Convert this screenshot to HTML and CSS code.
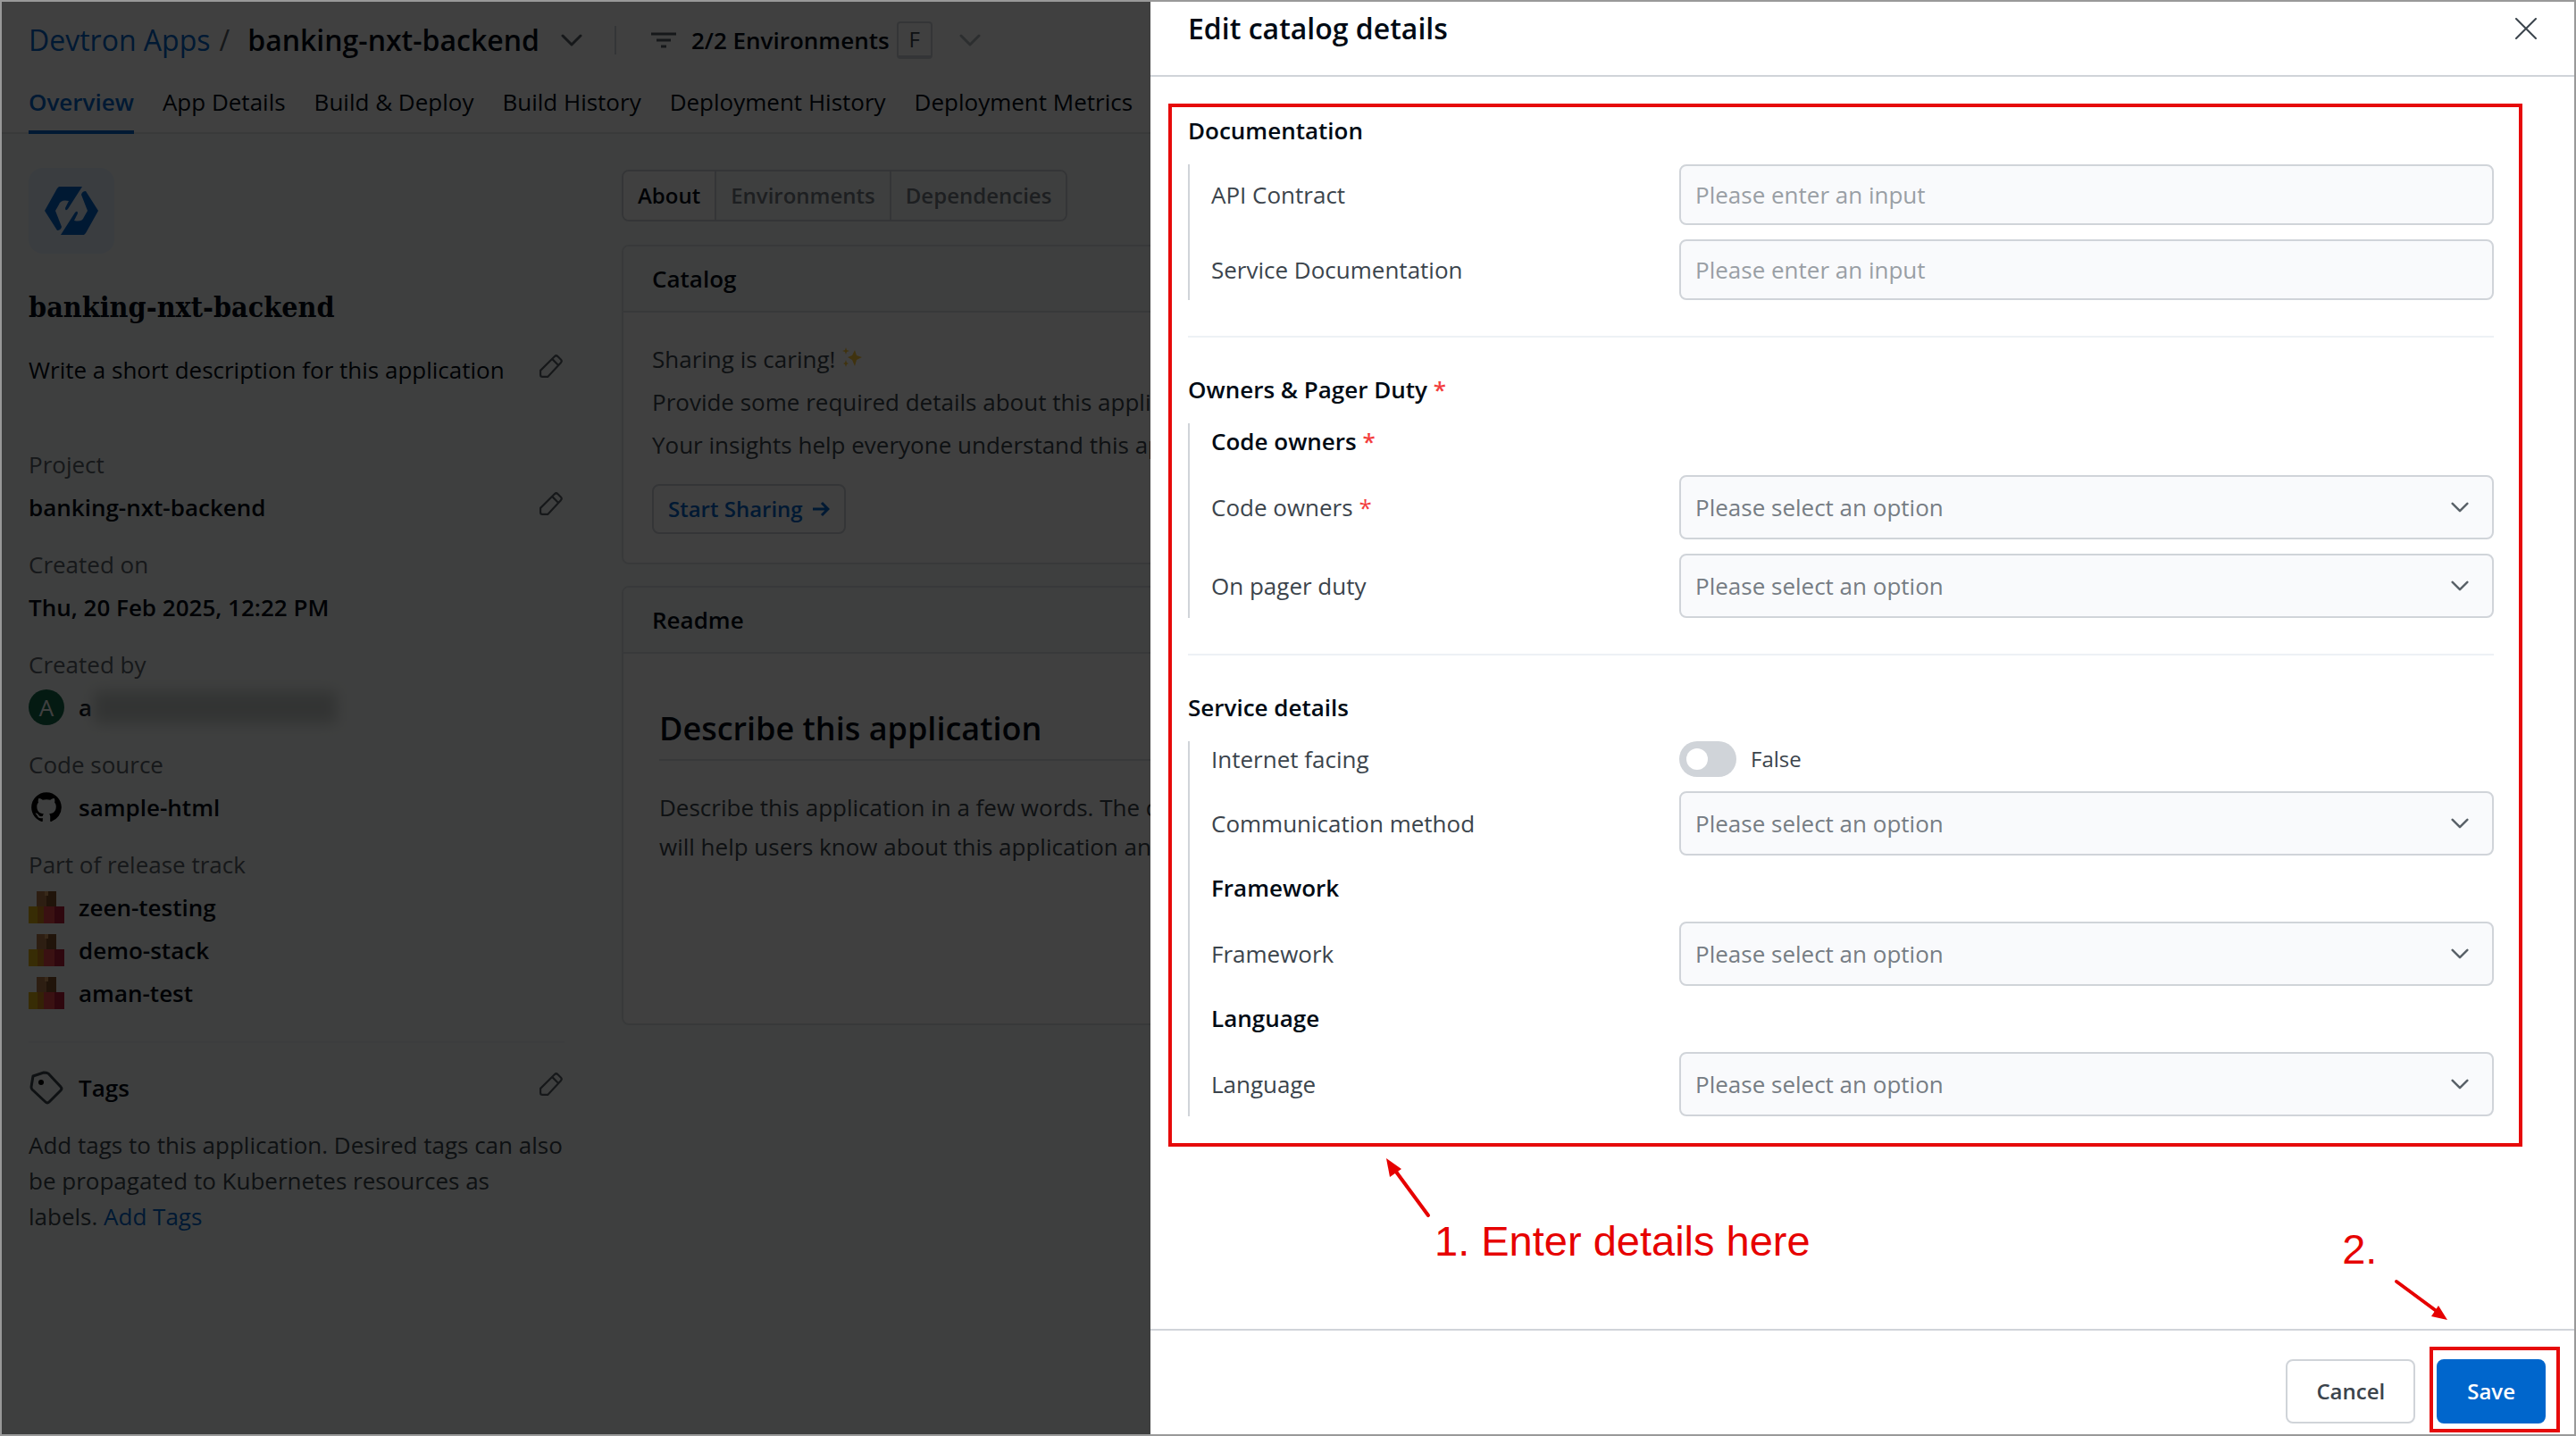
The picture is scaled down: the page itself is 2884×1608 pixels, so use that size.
FILE: index.html
```html
<!DOCTYPE html>
<html lang="en">
<head>
<meta charset="utf-8">
<meta name="viewport" content="width=device-width, initial-scale=1">
<title>banking-nxt-backend - Edit catalog details</title>
<link rel="stylesheet" href="styles.css">
</head>
<body>
<svg class="sprite" aria-hidden="true">
  <symbol id="chevron" viewBox="0 0 24 24"><path d="M2 7l10 10L22 7" fill="none" stroke="currentColor" stroke-width="3" stroke-linecap="round" stroke-linejoin="round"/></symbol>
  <symbol id="pencil" viewBox="2 2 24 24"><path d="M3 18.5 17.500 4a2.500 2.500 0 0 1 3.500 0l3 3a2.500 2.500 0 0 1 0 3.500L10.500 25H5a2 2 0 0 1-2-2zM15 6.500l6.500 6.500" fill="none" stroke="currentColor" stroke-width="2" stroke-linejoin="round"/></symbol>
  <symbol id="boxes" viewBox="0 0 40 36"><path fill="#b5794a" d="M9 0h11v18H9z"/><path fill="#80502b" d="M20 0h11v18H20z"/><path fill="#dcae14" d="M0 17h10v19H0z"/><path fill="#d08218" d="M10 17h10v19H10z"/><path fill="#e8434a" d="M17 17h12v19H17z"/><path fill="#b61f38" d="M29 17h11v19H29z"/><path fill="#d9a066" d="M18 0h4v5h-4z"/></symbol>
  <symbol id="logo-half" viewBox="0 0 60 54"><path d="M16 0h26L26 25q-3 3-3-1l4-8q-9-2-11 4l-4 7 7 18q-1 4-5 4L0 27 14 2z"/></symbol>
</svg>
<div class="frame">
  <div class="app">
    <header class="app-header">
      <div class="crumbs">
        <a class="link" href="#">Devtron Apps</a><span class="slash">/</span>
        <strong class="app-name">banking-nxt-backend</strong>
        <svg class="chev"><use href="#chevron"/></svg>
        <span class="rule"></span>
        <svg class="filter" viewBox="0 0 30 18"><path d="M1 2h28M7 9h16M12 16h6" fill="none" stroke="currentColor" stroke-width="3"/></svg>
        <span class="env-count">2/2 Environments</span><kbd class="key">F</kbd>
        <svg class="chev chev-dim"><use href="#chevron"/></svg>
      </div>
      <nav class="tabs">
        <a class="tab tab-active" href="#">Overview</a>
        <a class="tab" href="#">App Details</a>
        <a class="tab" href="#">Build &amp; Deploy</a>
        <a class="tab" href="#">Build History</a>
        <a class="tab" href="#">Deployment History</a>
        <a class="tab" href="#">Deployment Metrics</a>
      </nav>
    </header>
    <div class="columns">
      <section class="sidebar">
        <div class="tile"><svg class="logo" viewBox="0 0 60 54"><use href="#logo-half" width="60" height="54"/><use href="#logo-half" width="60" height="54" transform="rotate(180 30 27)"/></svg></div>
        <h1 class="side-title">banking-nxt-backend</h1>
        <div class="row desc"><span>Write a short description for this application</span><svg class="pencil"><use href="#pencil"/></svg></div>
        <dl class="facts">
          <div class="fact"><dt>Project</dt><dd class="row"><span>banking-nxt-backend</span><svg class="pencil"><use href="#pencil"/></svg></dd></div>
          <div class="fact"><dt>Created on</dt><dd>Thu, 20 Feb 2025, 12:22 PM</dd></div>
          <div class="fact"><dt>Created by</dt><dd class="item"><span class="avatar">A</span><span>a</span><span class="redacted"></span></dd></div>
          <div class="fact"><dt>Code source</dt><dd class="item"><svg class="icon" viewBox="-1.500 -1.500 19 19"><path d="M8 0C3.580 0 0 3.580 0 8c0 3.540 2.290 6.530 5.470 7.590.4.070.55-.17.55-.38 0-.19-.01-.82-.01-1.490-2.010.37-2.530-.49-2.690-.94-.09-.23-.48-.94-.82-1.130-.28-.15-.68-.52-.01-.53.63-.01 1.080.58 1.230.82.720 1.210 1.870.870 2.330.660.070-.52.280-.87.510-1.070-1.780-.2-3.640-.89-3.640-3.950 0-.87.310-1.590.820-2.150-.08-.2-.36-1.020.08-2.120 0 0 .67-.21 2.200.82.640-.18 1.320-.27 2-.27s1.360.09 2 .27c1.530-1.040 2.200-.82 2.200-.82.440 1.100.160 1.920.080 2.120.510.560.820 1.270.820 2.150 0 3.070-1.870 3.750-3.650 3.950.290.250.540.730.540 1.480 0 1.070-.01 1.930-.01 2.200 0 .210.150.460.550.380A8 8 0 0 0 16 8c0-4.420-3.580-8-8-8z"/></svg><span>sample-html</span></dd></div>
          <div class="fact"><dt>Part of release track</dt>
            <dd class="item"><svg class="icon"><use href="#boxes"/></svg><span>zeen-testing</span></dd>
            <dd class="item"><svg class="icon"><use href="#boxes"/></svg><span>demo-stack</span></dd>
            <dd class="item"><svg class="icon"><use href="#boxes"/></svg><span>aman-test</span></dd></div>
        </dl>
        <div class="tags">
          <div class="row tags-head"><h2 class="item tags-title"><svg class="icon" viewBox="0 0 40 40"><path d="M5 7 17 3q3 0 5 1l14 15q2 2 0 4L23 36q-2 2-4 0L4 22q-1-1-1-3z" fill="none" stroke="#3b444c" stroke-width="3" stroke-linejoin="round"/><circle cx="14" cy="14" r="3"/></svg><span>Tags</span></h2><svg class="pencil"><use href="#pencil"/></svg></div>
          <p class="tags-text">Add tags to this application. Desired tags can also be propagated to Kubernetes resources as labels. <a class="link" href="#">Add Tags</a></p>
        </div>
      </section>
      <main class="main">
        <div class="segments">
          <button class="segment segment-active" type="button">About</button><button class="segment" type="button">Environments</button><button class="segment" type="button">Dependencies</button>
        </div>
        <section class="card">
          <h2 class="card-head">Catalog</h2>
          <div class="card-body">
            <p>Sharing is caring! <svg class="sparkle" viewBox="0 0 24 24"><path fill="#ffc93c" d="M15 4l2 6 6 2-6 3-2 7-3-7-5-3 5-2zM5 1l1 3 3 1-3 1-1 3-1-3-3-1 3-1zM5 15l1 3 2 1-2 1-1 3-1-3-2-1 2-1z"/></svg></p>
            <p>Provide some required details about this application.</p>
            <p>Your insights help everyone understand this application better.</p>
            <button class="share" type="button">Start Sharing <svg class="arrow" viewBox="0 0 20 20"><path d="M1 10h17M11 3l7 7-7 7" fill="none" stroke="currentColor" stroke-width="3"/></svg></button>
          </div>
        </section>
        <section class="card">
          <h2 class="card-head">Readme</h2>
          <div class="readme">
            <h3>Describe this application</h3>
            <p>Describe this application in a few words. The description<br>will help users know about this application and its use.</p>
          </div>
        </section>
      </main>
    </div>
  </div>
  <div class="backdrop"></div>
  <aside class="drawer">
    <header class="drawer-head">
      <h2>Edit catalog details</h2>
      <button class="close" type="button" aria-label="Close"><svg viewBox="0 0 24 24"><path d="M1 1l22 22M23 1 1 23" fill="none" stroke="currentColor" stroke-width="2" stroke-linecap="round"/></svg></button>
    </header>
    <form class="drawer-body" id="catalog">
      <section class="section">
        <h3>Documentation</h3>
        <div class="group">
          <div class="field"><label for="api">API Contract</label><input class="control text" id="api" type="text" placeholder="Please enter an input"></div>
          <div class="field"><label for="doc">Service Documentation</label><input class="control text" id="doc" type="text" placeholder="Please enter an input"></div>
        </div>
      </section>
      <section class="section">
        <h3>Owners &amp; Pager Duty <span class="req">*</span></h3>
        <div class="group">
          <h4>Code owners <span class="req">*</span></h4>
          <div class="field"><label for="owners">Code owners <span class="req">*</span></label><div class="picker"><select class="control" id="owners"><option>Please select an option</option></select><svg class="chev"><use href="#chevron"/></svg></div></div>
          <div class="field"><label for="pager">On pager duty</label><div class="picker"><select class="control" id="pager"><option>Please select an option</option></select><svg class="chev"><use href="#chevron"/></svg></div></div>
        </div>
      </section>
      <section class="section">
        <h3>Service details</h3>
        <div class="group">
          <div class="field"><label for="facing">Internet facing</label><div class="switch"><input class="toggle" id="facing" type="checkbox" role="switch"><span>False</span></div></div>
          <div class="field"><label for="comm">Communication method</label><div class="picker"><select class="control" id="comm"><option>Please select an option</option></select><svg class="chev"><use href="#chevron"/></svg></div></div>
          <h4>Framework</h4>
          <div class="field"><label for="framework">Framework</label><div class="picker"><select class="control" id="framework"><option>Please select an option</option></select><svg class="chev"><use href="#chevron"/></svg></div></div>
          <h4>Language</h4>
          <div class="field"><label for="language">Language</label><div class="picker"><select class="control" id="language"><option>Please select an option</option></select><svg class="chev"><use href="#chevron"/></svg></div></div>
        </div>
      </section>
      <div class="mark mark-form"></div>
      <div class="note note-form"><svg class="note-arrow-form" viewBox="0 0 56 72"><path d="M51 67 12 14" fill="none" stroke="currentColor" stroke-width="4" stroke-linecap="round"/><path fill="currentColor" d="M4 3l17 12-13 9z"/></svg><span>1. Enter details here</span></div>
    </form>
    <footer class="drawer-foot">
      <button class="btn" type="button">Cancel</button>
      <div class="save-wrap"><button class="btn btn-primary" type="submit" form="catalog">Save</button><div class="mark mark-save"></div>
      <div class="note note-save"><span>2.</span><svg class="note-arrow-save" viewBox="0 0 64 52"><path d="M4 4l46 34" fill="none" stroke="currentColor" stroke-width="4" stroke-linecap="round"/><path fill="currentColor" d="M61 47 43 43l8-12z"/></svg></div></div>
    </footer>
  </aside>
</div>
</body>
</html>
```
FILE: styles.css
```css
* { box-sizing: border-box; }
body, h1, h2, h3, h4, p, dl, dd { margin: 0; }
body {
  font: 400 26px/40px "Open Sans", sans-serif;
  color: #000a14;
  background: #fff;
}
button, input, select { font: inherit; color: inherit; margin: 0; }
button { font-size: 24px; font-weight: 600; }
a { color: inherit; text-decoration: none; }
svg { display: block; flex: none; }
.sprite { position: absolute; width: 0; height: 0; }
.link { color: #0066cc; }

.frame { position: relative; min-height: 100vh; border: 2px solid #999; overflow: hidden; display: grid; }

/* Application page */
.app { display: flex; flex-direction: column; background: #f8fcfa; }
.app-header { background: #fff; border-bottom: 2px solid #e2e8e6; padding: 18px 30px 0; white-space: nowrap; }
.crumbs { display: flex; align-items: center; height: 50px; font-size: 32px; }
.slash { margin: 0 20px 0 10px; color: #596168; }
.app-name { font-weight: 600; }
.chev { width: 24px; height: 24px; color: #596168; }
.crumbs .chev { margin-left: 24px; }
.crumbs .chev-dim { margin-left: 30px; color: #b0b7bc; }
.rule { width: 2px; height: 32px; margin: 0 38px 0 36px; background: #d0d4d9; }
.filter { width: 30px; height: 18px; margin-right: 16px; color: #596168; }
.env-count { font-size: 26px; font-weight: 600; }
.key { width: 40px; height: 42px; margin-left: 8px; border: 2px solid #d0d4d9; border-bottom-width: 4px; border-radius: 4px; font: 24px/36px "Open Sans", sans-serif; text-align: center; color: #3b444c; }
.tabs { display: flex; gap: 32px; margin-top: 24px; }
.tab { padding-bottom: 12px; border-bottom: 4px solid transparent; margin-bottom: -2px; }
.tab-active { color: #0066cc; border-color: #0066cc; font-weight: 600; }

.columns { display: flex; flex: 1; padding: 38px 30px 24px; gap: 64px; }
.sidebar { flex: none; width: 600px; }
.tile { display: grid; place-items: center; width: 96px; height: 96px; border-radius: 16px; background: #e5f2ff; }
.logo { width: 60px; height: 54px; fill: #0066cc; }
.side-title { margin: 38px 0 28px; font: 700 32px/44px "DejaVu Serif Condensed", "DejaVu Serif", serif; }
.row { display: flex; align-items: center; justify-content: space-between; }
.pencil { width: 26px; height: 26px; margin: 0 2px 8px 0; color: #596168; }
.facts { margin-top: 66px; }
.fact { margin-bottom: 24px; }
.fact dt { color: #596168; }
.fact dd { margin-top: 8px; font-weight: 600; }
.item { display: flex; align-items: center; gap: 16px; }
.icon { width: 40px; height: 40px; }
.avatar { width: 40px; height: 40px; border-radius: 50%; background: #12684a; color: #fff; text-align: center; font-weight: 400; }
.redacted { width: 272px; height: 36px; margin-left: -14px; background: #c8cdcb; filter: blur(8px); }
.tags { margin-top: 34px; border-top: 2px solid #edf1f5; padding-top: 30px; }
.tags-title { font-size: 26px; font-weight: 600; line-height: 40px; }
.tags-text { margin-top: 24px; color: #3b444c; }

.main { flex: 1; min-width: 0; color: #3b444c; white-space: nowrap; }
.segments { display: flex; width: max-content; margin: 2px 0 26px; border: 2px solid #d0d4d9; border-radius: 8px; overflow: hidden; }
.segment { height: 54px; padding: 0 16px; border: 0; border-right: 2px solid #d0d4d9; background: #f8fcfa; color: #767d84; }
.segment:last-child { border-right: 0; }
.segment-active { background: #fff; color: #000a14; }
.card { border: 2px solid #dde3e6; border-radius: 8px; background: #fff; margin-bottom: 24px; overflow: hidden; }
.card-head { padding: 16px 32px; background: #f8fcfa; border-bottom: 2px solid #dde3e6; color: #000a14; font-size: 26px; font-weight: 600; line-height: 40px; }
.card-body { padding: 28px 32px 32px; line-height: 48px; }
.sparkle { display: inline-block; width: 24px; height: 24px; }
.share { display: flex; align-items: center; gap: 10px; height: 56px; margin-top: 20px; padding: 0 16px; border: 2px solid #d0d4d9; border-radius: 8px; background: #fff; color: #0066cc; }
.arrow { width: 20px; height: 20px; }
.readme { min-height: 414px; padding: 58px 40px; line-height: 44px; }
.readme h3 { padding-bottom: 8px; margin-bottom: 30px; border-bottom: 2px solid #dde3e6; color: #000a14; font-size: 36px; font-weight: 600; line-height: 52px; }

.backdrop { position: absolute; inset: 0; background: rgba(0, 0, 0, .75); }

/* Drawer */
.drawer { position: absolute; inset: 0 0 0 auto; width: 1594px; max-width: 100%; display: flex; flex-direction: column; background: #fff; }
.drawer-head { display: flex; justify-content: space-between; padding: 8px 42px 30px; border-bottom: 2px solid #d0d4d9; }
.drawer-head h2 { font-size: 32px; line-height: 44px; font-weight: 600; }
.close { display: grid; place-items: center; width: 24px; height: 44px; padding: 0; border: 0; background: none; color: #3b444c; }
.close svg { width: 24px; height: 24px; }
.drawer-body { position: relative; flex: 1; padding: 2px 90px 0 42px; }
.section { padding: 40px 0; }
.section + .section { border-top: 2px solid #edf1f5; }
.section h3 { margin-bottom: 20px; font-size: 26px; line-height: 36px; font-weight: 600; }
.group { display: flex; flex-direction: column; gap: 16px; padding-left: 24px; border-left: 2px solid #d0d4d9; }
.group h4 { padding-bottom: 2px; font-size: 26px; line-height: 40px; font-weight: 600; }
.req { color: #f33e3e; }
.field { display: grid; grid-template-columns: 524px 1fr; align-items: center; color: #3b444c; }
.control { display: block; width: 100%; height: 72px; padding: 0 16px; border: 2px solid #d0d4d9; border-radius: 8px; background: #f9fafc; color: #767d84; appearance: none; }
.text { height: 68px; }
.control::placeholder { color: #999fa5; opacity: 1; }
.picker { display: grid; align-items: center; }
.picker > * { grid-area: 1 / 1; }
.picker .chev { justify-self: end; width: 20px; height: 20px; margin-right: 28px; pointer-events: none; }
.switch { display: flex; align-items: center; gap: 16px; font-size: 24px; }
.toggle { appearance: none; width: 64px; height: 40px; padding: 8px; border-radius: 20px; background: #d0d4d9; }
.toggle::before { content: ""; display: block; width: 24px; height: 24px; border-radius: 50%; background: #fff; }
.drawer-foot { display: flex; justify-content: flex-end; gap: 24px; padding: 32px 32px 12px; border-top: 2px solid #d0d4d9; }
.btn { height: 72px; padding: 0 32px; border: 2px solid #d0d4d9; border-radius: 8px; background: #fff; color: #3b444c; }
.btn-primary { background: #0066cc; border-color: #0066cc; color: #fff; }
.save-wrap { position: relative; }

/* Walkthrough annotations, drawn over the drawer */
.mark { position: absolute; border: 4px solid #e60a0a; pointer-events: none; }
.mark-form { top: 30px; left: 20px; right: 58px; height: 1168px; }
.mark-save { inset: -14px -16px -10px -8px; }
.note { position: absolute; display: flex; color: #e60000; font: 47px/56px "Liberation Sans", Arial, sans-serif; white-space: nowrap; }
.note-form { top: 1208px; left: 260px; padding-top: 68px; }
.note-form span { margin-left: 58px; }
.note-arrow-form { position: absolute; top: 0; left: 0; width: 56px; height: 72px; }
.note-save { top: -151px; left: -106px; }
.note-arrow-save { position: absolute; top: 60px; left: 57px; width: 64px; height: 52px; }
```
